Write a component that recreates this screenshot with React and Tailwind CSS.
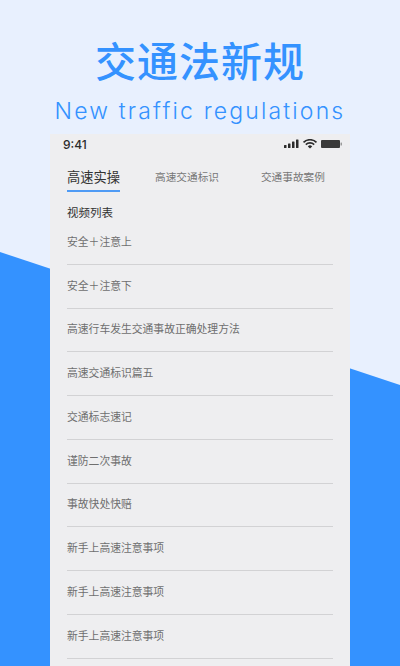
const videos = [
  "安全＋注意上",
  "安全＋注意下",
  "高速行车发生交通事故正确处理方法",
  "高速交通标识篇五",
  "交通标志速记",
  "谨防二次事故",
  "事故快处快赔",
  "新手上高速注意事项",
  "新手上高速注意事项",
  "新手上高速注意事项",
];

const StatusIcons = () => (
  <svg width="60" height="10" viewBox="0 0 60 10" fill="#2b2b2b" className="-mt-[2px]">
    <rect x="0" y="6" width="2.5" height="3" rx="0.5" />
    <rect x="4" y="4.5" width="2.5" height="4.5" rx="0.5" />
    <rect x="8" y="2.5" width="2.5" height="6.5" rx="0.5" />
    <rect x="12" y="0.5" width="2.5" height="8.5" rx="0.5" />
    <path d="M19.5 3.4a9.2 9.2 0 0 1 13 0" fill="none" stroke="#2b2b2b" strokeWidth="1.6" />
    <path d="M21.8 5.6a6 6 0 0 1 8.4 0" fill="none" stroke="#2b2b2b" strokeWidth="1.6" />
    <path d="M23.8 7.4a3 3 0 0 1 4.4 0L26 9.6z" />
    <rect x="37" y="1" width="19" height="8" rx="1" fill="#3a3a3a" />
    <rect x="56.5" y="3.5" width="1.5" height="3" rx="0.5" fill="#9a9a9a" />
  </svg>
);

export default function App() {
  return (
    <div
      className="relative w-[400px] h-[666px] overflow-hidden bg-[#e8f0fe]"
      style={{ fontFamily: '"Noto Sans CJK SC", "Noto Sans", sans-serif' }}
    >
      {/* diagonal blue background */}
      <div className="absolute inset-0 bg-[#3492ff] [clip-path:polygon(0_252px,400px_385px,400px_666px,0_666px)]" />

      <div className="relative flex flex-col items-center">
        <h1 className="mt-[32px] h-[54px] text-[41px] leading-[54px] font-medium text-[#3492ff] tracking-[1px] whitespace-nowrap">
          交通法新规
        </h1>
        <p
          className="mt-[10px] h-[30px] text-[23px] leading-[30px] font-light text-[#3492ff] tracking-[2.16px] whitespace-nowrap"
          style={{ fontFamily: '"Inter", sans-serif' }}
        >
          New traffic regulations
        </p>

        <div className="mt-[8px] w-[300px] h-[540px] bg-[#eeeef0] overflow-hidden">
          <div className="flex items-center justify-between h-[22px] pl-[13px] pr-[6px]">
            <span className="text-[12px] font-medium text-[#2b2b2b]" style={{ fontFamily: '"Inter", sans-serif' }}>
              9:41
            </span>
            <StatusIcons />
          </div>

          <div className="flex items-start mt-[10px] pl-[17px]">
            <div className="w-[53px] border-b-2 border-[#4f9bf5] pb-[2px]">
              <span className="block text-[13.25px] leading-[22px] text-[#333333] whitespace-nowrap">高速实操</span>
            </div>
            <span className="ml-[35px] text-[10.67px] leading-[22px] text-[#777777] whitespace-nowrap">高速交通标识</span>
            <span className="ml-[42px] text-[10.67px] leading-[22px] text-[#777777] whitespace-nowrap">交通事故案例</span>
          </div>

          <div className="mt-[11px] px-[17px] text-[11.5px] leading-[18px] text-[#333333]">视频列表</div>

          <ul className="px-[17px]">
            {videos.map((title, i) => (
              <li
                key={i}
                className="h-[43.75px] pb-[3px] flex items-center border-b border-[#d2d2d4] text-[10.8px] text-[#6f6f6f] whitespace-nowrap"
              >
                {title}
              </li>
            ))}
          </ul>
        </div>
      </div>
    </div>
  );
}
